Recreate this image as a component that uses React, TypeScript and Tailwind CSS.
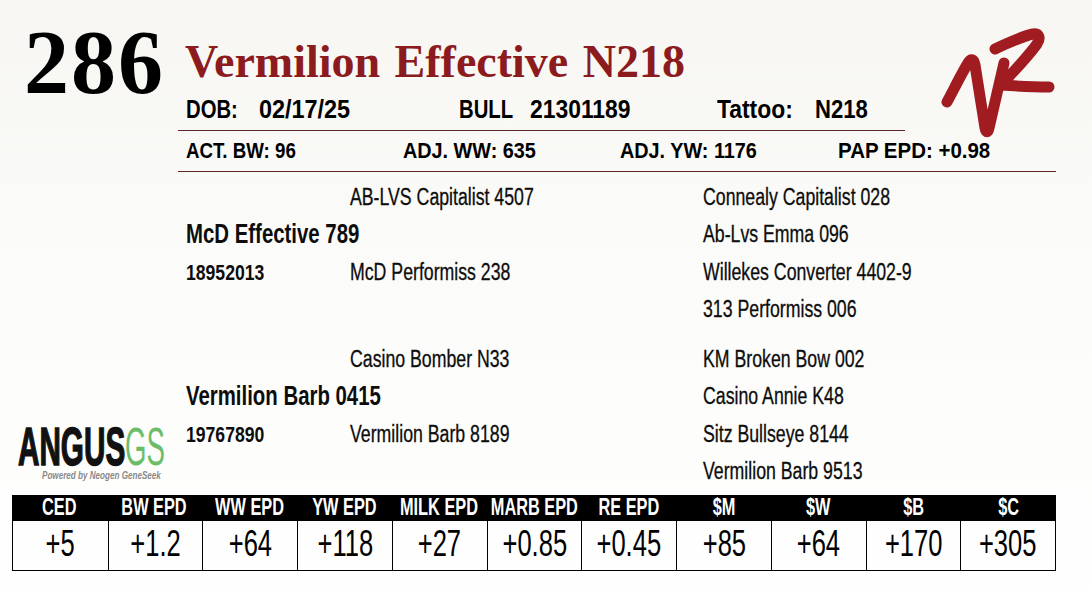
import type { ReactNode } from "react";

type Parent = {
  top: string;
  name: string;
  reg: string;
  bottom: string;
  right: string[];
};

const SIRE: Parent = {
  top: "AB-LVS Capitalist 4507",
  name: "McD Effective 789",
  reg: "18952013",
  bottom: "McD Performiss 238",
  right: ["Connealy Capitalist 028", "Ab-Lvs Emma 096", "Willekes Converter 4402-9", "313 Performiss 006"],
};

const DAM: Parent = {
  top: "Casino Bomber N33",
  name: "Vermilion Barb 0415",
  reg: "19767890",
  bottom: "Vermilion Barb 8189",
  right: ["KM Broken Bow 002", "Casino Annie K48", "Sitz Bullseye 8144", "Vermilion Barb 9513"],
};

const EPDS = [
  ["CED", "+5"],
  ["BW EPD", "+1.2"],
  ["WW EPD", "+64"],
  ["YW EPD", "+118"],
  ["MILK EPD", "+27"],
  ["MARB EPD", "+0.85"],
  ["RE EPD", "+0.45"],
  ["$M", "+85"],
  ["$W", "+64"],
  ["$B", "+170"],
  ["$C", "+305"],
];

// condensed text: Liberation Sans squeezed horizontally
function N({ s, className = "", children }: { s: string; className?: string; children: ReactNode }) {
  return <span className={`inline-block whitespace-nowrap origin-left ${s} ${className}`}>{children}</span>;
}

function VRLogo() {
  return (
    <svg width="125" height="115" viewBox="0 0 125 115" fill="none">
      <g stroke="#a01c21" strokeWidth="11" strokeLinecap="round" strokeLinejoin="round">
        <path d="M12 77 C20 62 28 46 33 38 C36 33 39 34 40 40 L50 103 C51 108 53 108 54 103 L69 38" />
        <path d="M60 24 C75 17 88 11 98 9 C104 8 106 13 102 19 C92 33 78 47 66 60 C80 61 100 62 114 62" />
      </g>
    </svg>
  );
}

function AngusLogo() {
  return (
    <div className="pl-[18px] pb-[9.5px]">
      <div className="h-[46px] leading-[46px] text-[53px]">
        <N s="scale-x-[0.56]" className="font-bold text-[#111] [-webkit-text-stroke:1.5px_#111]">
          ANGUS
          <span className="inline-block origin-left scale-x-[0.93] font-normal text-[#6cbd69] [-webkit-text-stroke:0px]">GS</span>
        </N>
      </div>
      <div className="mt-[1px] pl-[24px] h-[10px] leading-[10px] text-[10px]">
        <N s="scale-x-[0.81]" className="italic font-bold text-[#8a8a8a]">Powered by Neogen GeneSeek</N>
      </div>
    </div>
  );
}

function Group({ p }: { p: Parent }) {
  const rows: ReactNode[][] = [
    [null, p.top, p.right[0]],
    [
      <N s="scale-x-[0.755]" className="text-[27px] font-bold">{p.name}</N>,
      null,
      p.right[1],
    ],
    [
      <N s="scale-x-[0.8]" className="text-[22px] font-bold">{p.reg}</N>,
      p.bottom,
      p.right[2],
    ],
    [null, null, p.right[3]],
  ];
  return (
    <div>
      {rows.map((r, i) => (
        <div key={i} className="flex h-[37.5px] leading-[37.5px] text-[#0d0d0d]">
          <div className="w-[164px]">{r[0]}</div>
          <div className="w-[353px]">
            {r[1] && <N s="scale-x-[0.77]" className="text-[23px] [-webkit-text-stroke:0.3px_#0d0d0d]">{r[1]}</N>}
          </div>
          <div className="flex-1">
            {r[2] && <N s="scale-x-[0.77]" className="text-[23px] [-webkit-text-stroke:0.3px_#0d0d0d]">{r[2]}</N>}
          </div>
        </div>
      ))}
    </div>
  );
}

export default function App() {
  return (
    <div className="w-[1092px] h-[616px] overflow-hidden bg-linear-to-b from-[#f7f6f2] via-[#fbfbf9] via-40% to-white font-['Liberation_Sans',Arial,sans-serif] text-black">
      {/* header */}
      <div className="flex pt-[18px]">
        <div className="w-[178px] pl-[24px]">
          <div className="font-['Liberation_Serif',serif] font-bold text-[90px] leading-none tracking-[2px]">286</div>
        </div>
        <div className="flex-1 flex flex-col">
          <div className="flex">
            <div className="w-[727px]">
              <div className="pt-[20.5px] pl-[7px] font-['Liberation_Serif',serif] font-bold text-[46px] leading-none text-[#8c1b20] [word-spacing:3px]">
                Vermilion Effective N218
              </div>
              <div className="flex pt-[11.5px] pb-[8px] pl-[8px] text-[26px] leading-none font-bold border-b-[1.5px] border-[#5e2626]">
                <div className="w-[73px]"><N s="scale-x-[0.78]">DOB:</N></div>
                <div className="w-[200px]"><N s="scale-x-[0.9]">02/17/25</N></div>
                <div className="w-[71px]"><N s="scale-x-[0.78]">BULL</N></div>
                <div className="w-[187px]"><N s="scale-x-[0.88]">21301189</N></div>
                <div className="w-[98px]"><N s="scale-x-[0.88]">Tattoo:</N></div>
                <div><N s="scale-x-[0.85]">N218</N></div>
              </div>
            </div>
            <div className="h-[113.5px] pl-[30px] pt-[7px]">
              <VRLogo />
            </div>
          </div>
          <div className="w-[878px] flex pt-[8.5px] pb-[9px] pl-[8px] text-[22px] leading-none font-bold border-b-[1.5px] border-[#5e2626]">
            <div className="w-[217px]"><N s="scale-x-[0.85]">ACT. BW: 96</N></div>
            <div className="w-[217px]"><N s="scale-x-[0.9]">ADJ. WW: 635</N></div>
            <div className="w-[218px]"><N s="scale-x-[0.9]">ADJ. YW: 1176</N></div>
            <div><N s="scale-x-[0.93]">PAP EPD: +0.98</N></div>
          </div>
        </div>
      </div>

      {/* pedigree */}
      <div className="flex mt-[6.5px]">
        <div className="w-[186px] flex flex-col justify-end">
          <AngusLogo />
        </div>
        <div className="flex-1 flex flex-col gap-[12px]">
          <Group p={SIRE} />
          <Group p={DAM} />
        </div>
      </div>

      {/* epd table */}
      <div className="ml-[12px] mt-[4px] w-[1044px]">
        <div className="grid grid-cols-11 h-[26px] bg-black text-white">
          {EPDS.map(([h]) => (
            <div key={h} className="flex items-center justify-center text-[23px] font-bold leading-none">
              <span className="inline-block whitespace-nowrap origin-center scale-x-[0.71]">{h}</span>
            </div>
          ))}
        </div>
        <div className="grid grid-cols-11 h-[50px] border-x border-b border-black">
          {EPDS.map(([h, v], i) => (
            <div
              key={h}
              className={`flex items-center justify-center pb-[3px] text-[37px] leading-none ${i > 0 ? "border-l border-black" : ""}`}
            >
              <span className="inline-block whitespace-nowrap origin-center scale-x-[0.69]">{v}</span>
            </div>
          ))}
        </div>
      </div>
    </div>
  );
}
